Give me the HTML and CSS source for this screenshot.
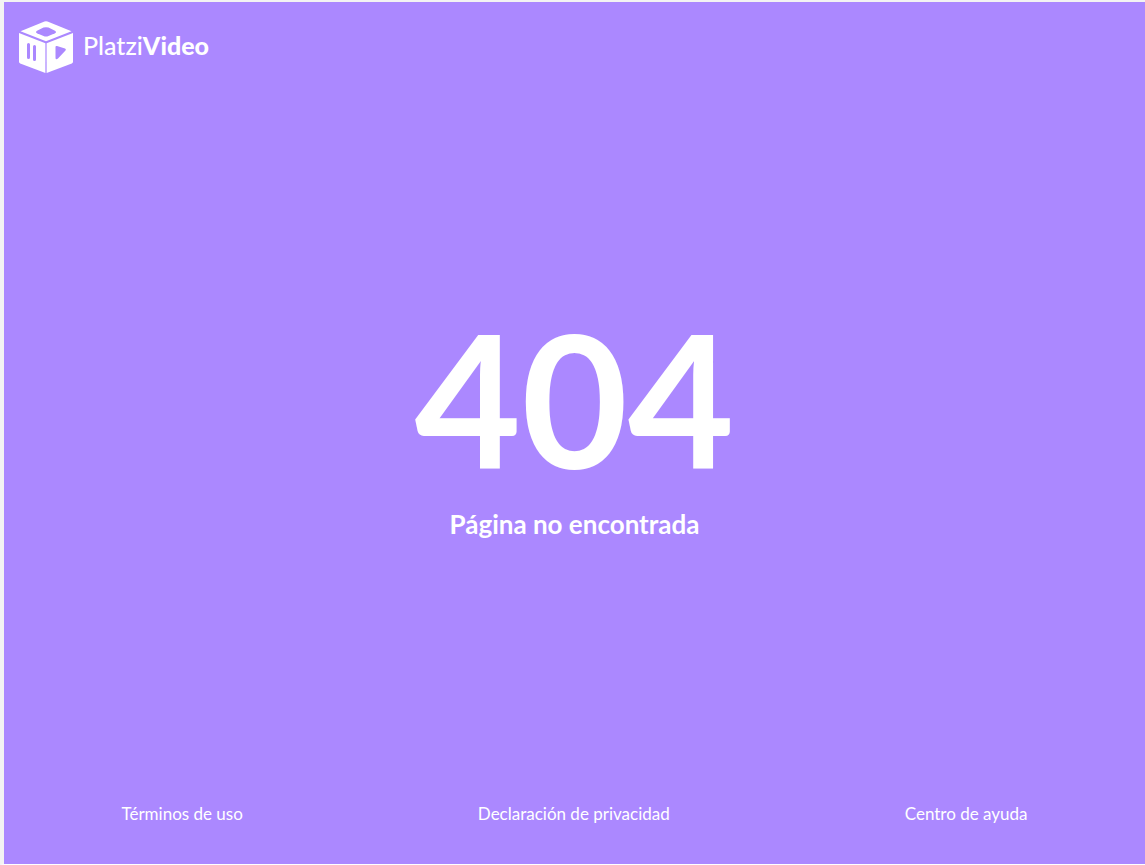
FILE: index.html
```html
<!DOCTYPE html>
<html lang="es">
<head>
<meta charset="utf-8">
<meta name="viewport" content="width=device-width, initial-scale=1">
<title>PlatziVideo</title>
<link rel="stylesheet" href="styles.css">
</head>
<body>
<div class="page">
  <header class="header">
    <a class="brand" href="#" aria-label="PlatziVideo">
      <svg class="brand-icon" viewBox="0 0 54 52" aria-hidden="true">
        <path class="face" d="M1.5 10.3 L25.5 .6 Q27 0 28.500 .6 L52.500 10.300 L27 20.300 Z"/>
        <path class="face" d="M0 12 L26.400 22.300 V52 L1.200 42.600 Q0 42 0 40.800 Z"/>
        <path class="face" d="M54 12 L27.600 22.300 V52 L52.800 42.600 Q54 42 54 40.800 Z"/>
        <path class="mark" d="M18 9.700 L24.500 6.600 Q27 5.800 29.500 6.600 L36 9.700 Q38 11 36 12.300 L29.500 15 Q27 16 24.500 15 L18 12.300 Q16 11 18 9.700 Z"/>
        <path class="bar" d="M9.500 23.500 V36.500 M15.500 25.500 V38.500"/>
        <path class="mark" d="M36.500 26 Q36.500 24.500 38 25 L46 27.400 Q47.500 28 46.500 29.500 L39 37.600 Q36.500 39.500 36.500 36.500 Z"/>
      </svg>
      <span class="brand-name">Platzi<strong>Video</strong></span>
    </a>
  </header>
  <main class="error">
    <h1 class="error-code">404</h1>
    <h2 class="error-text">Página no encontrada</h2>
  </main>
  <footer class="footer">
    <a href="#">Términos de uso</a>
    <a href="#">Declaración de privacidad</a>
    <a href="#">Centro de ayuda</a>
  </footer>
</div>
</body>
</html>
```
FILE: styles.css
```css
* { box-sizing: border-box; }
body {
  margin: 0;
  background: #f3f3f3;
  color: #fff;
  font-family: Lato, "Noto Sans", sans-serif;
}
a { color: inherit; text-decoration: none; }
.page {
  min-height: 100vh;
  display: flex;
  flex-direction: column;
  background: #ab88ff;
  border: solid #f3f3f3;
  border-width: 2px 0 0 4px;
  border-bottom: 1px solid #fff;
}
.header {
  display: flex;
  height: 88px;
  padding: 19px 15px;
}
.brand {
  display: flex;
  align-items: center;
  gap: 10px;
  height: 52px;
}
.brand-icon { width: 54px; height: 52px; }
.face { fill: #fff; }
.mark { fill: #ab88ff; }
.bar { stroke: #ab88ff; stroke-width: 3; stroke-linecap: round; fill: none; }
.brand-name {
  padding-bottom: 4px;
  font-size: 25px;
  line-height: 28px;
  font-weight: 500;
}
.brand-name strong { font-weight: 900; }
.error {
  flex: 1;
  display: flex;
  flex-direction: column;
  align-items: center;
  justify-content: center;
  padding-bottom: 26px;
}
.error-code {
  margin: 0;
  font-size: 184px;
  line-height: 220px;
  font-weight: 700;
}
.error-text {
  margin: 0;
  font-size: 26px;
  line-height: 32px;
  font-weight: 700;
}
.footer {
  display: flex;
  justify-content: space-around;
  align-items: center;
  height: 100px;
  font-size: 17px;
  line-height: 20px;
}
```
